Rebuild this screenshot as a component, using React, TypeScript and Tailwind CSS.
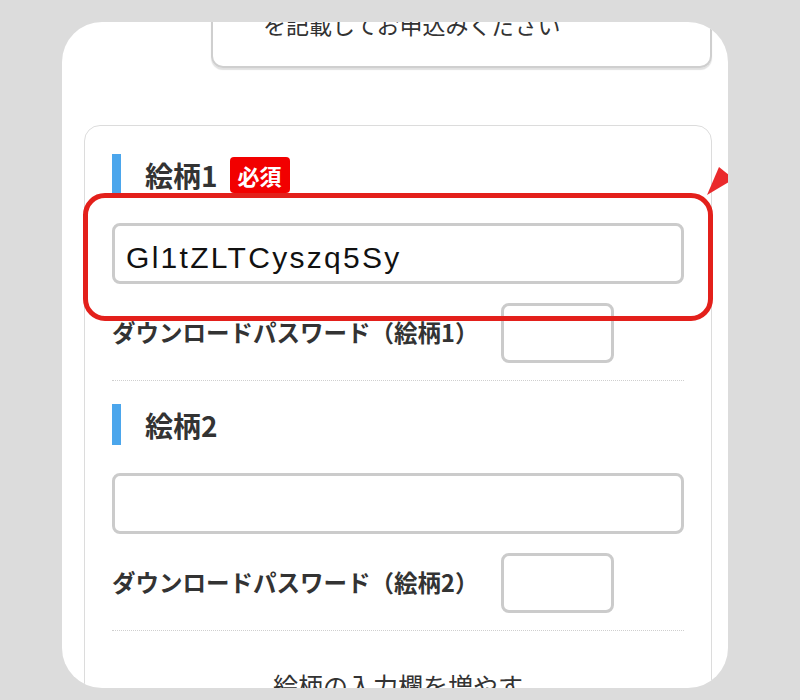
import React from 'react';

const jp = "font-['Noto_Sans_CJK_JP','Noto_Sans',sans-serif]";

function Heading({ label, required }: { label: string; required?: boolean }) {
  return (
    <div className="flex items-center h-[41px]">
      <div className="w-[9px] h-[41px] bg-[#4ba6ec]" />
      <span className="ml-[24px] text-[28px] font-bold text-[#333] leading-none">{label}</span>
      {required && (
        <span className="ml-[12px] h-[36px] px-[8px] rounded-[4px] bg-[#f20000] text-white text-[22px] font-bold flex items-center leading-none">
          必須
        </span>
      )}
    </div>
  );
}

function PatternField({ index, value, highlight }: { index: number; value?: string; highlight?: boolean }) {
  return (
    <div className="relative">
      <Heading label={`絵柄${index}`} required={index === 1} />
      <div className="mt-[28px] h-[61px] rounded-[8px] border-[3px] border-[#cbcbcb] bg-white flex items-center px-[11px] pt-[8px]">
        {value && (
          <span className="font-['Liberation_Sans',Arial,sans-serif] text-[30px] tracking-[2.3px] text-[#111] leading-none">
            {value}
          </span>
        )}
      </div>
      <div className="mt-[19px] flex items-center">
        <span className="w-[389px] text-[23.5px] font-bold text-[#333] leading-none">
          ダウンロードパスワード（絵柄{index}）
        </span>
        <div className="w-[113px] h-[60px] rounded-[8px] border-[3px] border-[#cbcbcb] bg-white" />
      </div>
      <div className="mt-[17px] border-t border-dotted border-[#cfcfcf]" />

      {highlight && (
        <>
          <div className="absolute left-[-29px] top-[39px] w-[630px] h-[128px] rounded-[22px] border-[5px] border-[#e3201b] pointer-events-none" />
          <svg className="absolute left-[595px] top-[13px]" width="28" height="30" viewBox="0 0 28 30">
            <polygon points="0,28 12,0 27,12" fill="#ea2a2c" />
          </svg>
        </>
      )}
    </div>
  );
}

export default function App() {
  return (
    <div className={`${jp} w-[800px] h-[700px] bg-[#dcdcdc] pt-[22px] pl-[62px] overflow-hidden`}>
      <div className="w-[666px] h-[666px] bg-white rounded-[40px] overflow-hidden">
        {/* notice box, scrolled partly out of view */}
        <div className="-mt-[40px] ml-[149px] mr-[16px] h-[86px] border-2 border-t-0 border-[#cfcfcf] rounded-b-[12px] shadow-[0_2px_1px_rgba(0,0,0,0.12)] pl-[50px] pt-[26px]">
          <p className="text-[23px] leading-[32px] text-[#333]">を記載してお申込みください</p>
        </div>

        {/* pattern form */}
        <div className="mt-[57px] ml-[22px] mr-[16px] border border-[#dcdcdc] rounded-[16px] px-[27px] pt-[28px] pb-[40px]">
          <PatternField index={1} value="Gl1tZLTCyszq5Sy" highlight />
          <div className="mt-[23px]">
            <PatternField index={2} />
          </div>
          <p className="mt-[36px] text-center text-[25px] text-[#333] leading-[37px]">絵柄の入力欄を増やす</p>
        </div>
      </div>
    </div>
  );
}
